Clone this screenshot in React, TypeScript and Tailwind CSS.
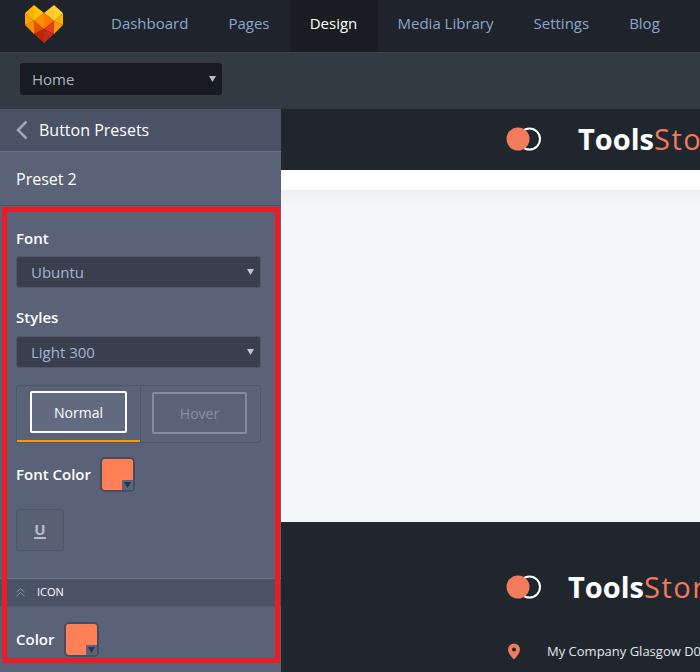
const NAV = ["Dashboard", "Pages", "Design", "Media Library", "Settings", "Blog"];

const Logo = () => (
  <svg width="40" height="40" viewBox="0 0 40 40" className="shrink-0">
    <polygon points="1,9 10,1 10,17" fill="#ffb300" />
    <polygon points="10,1 20,9 10,17" fill="#ffc107" />
    <polygon points="20,9 30,1 30,17" fill="#ffca28" />
    <polygon points="30,1 39,9 30,17" fill="#ffd02e" />
    <polygon points="1,9 10,17 1,21" fill="#ffa000" />
    <polygon points="39,9 30,17 39,21" fill="#ffb300" />
    <polygon points="20,9 10,17 20,25" fill="#ff8f00" />
    <polygon points="20,9 30,17 20,25" fill="#ff7a00" />
    <polygon points="1,21 10,17 10,30" fill="#ff8f00" />
    <polygon points="39,21 30,17 30,30" fill="#ff9800" />
    <polygon points="10,17 20,25 10,30" fill="#e65100" />
    <polygon points="30,17 20,25 30,30" fill="#e53a25" />
    <polygon points="10,30 20,25 20,39" fill="#bf2308" />
    <polygon points="30,30 20,25 20,39" fill="#c62c10" />
  </svg>
);

const BrandMark = () => (
  <svg width="36" height="24" viewBox="0 0 36 24" className="shrink-0">
    <circle cx="23.5" cy="12" r="10.5" fill="none" stroke="#ffffff" strokeWidth="2" />
    <circle cx="12" cy="12" r="11.5" fill="#f07c5b" />
  </svg>
);

const Caret = ({ className }: { className: string }) => (
  <svg width="7" height="6" viewBox="0 0 7 6" className={className}>
    <polygon points="0,0 7,0 3.5,6" fill="currentColor" />
  </svg>
);

const FieldSelect = ({ value }: { value: string }) => (
  <div className="flex h-[32px] items-center justify-between rounded-[3px] border border-[#4e566a] bg-[#3a3f50] pl-[14px] pr-[6px] text-[15px] text-[#a3b4cf]">
    <span className="pt-[1px]">{value}</span>
    <Caret className="text-[#c3c8d2]" />
  </div>
);

const Swatch = () => (
  <div className="relative h-[35px] w-[35px] overflow-hidden rounded-[5px] border-2 border-[#454c5f] bg-[#ff7f57]">
    <div className="absolute bottom-0 right-0 flex h-[10px] w-[11px] items-center justify-center bg-[#5a6277]">
      <Caret className="text-[#2f3443]" />
    </div>
  </div>
);

const Brand = () => (
  <span className="whitespace-nowrap text-[29px] font-bold leading-[24px] text-white">
    Tools<span className="font-normal tracking-[1.5px] text-[#f4795b]">Store</span>
  </span>
);

export default function App() {
  return (
    <div className="flex h-[672px] w-[700px] flex-col overflow-hidden bg-white font-['Open_Sans',sans-serif]">
      {/* top nav */}
      <div className="flex h-[53px] shrink-0 items-stretch border-b border-[#3a434e] bg-[#1f232c]">
        <div className="flex w-[91px] items-center pb-[5px] pl-[24px]">
          <Logo />
        </div>
        {NAV.map((item) => (
          <div
            key={item}
            className={
              item === "Design"
                ? "flex w-[88px] items-center justify-center bg-[#191c21] pb-[5px] text-[15px] font-medium text-white"
                : "flex items-center px-5 pb-[5px] text-[15px] text-[#8ba6cf]"
            }
          >
            {item}
          </div>
        ))}
      </div>

      {/* page select bar */}
      <div className="flex h-[56px] shrink-0 items-center bg-[#323b44] pb-[4px] pl-[20px]">
        <div className="flex h-[32px] w-[202px] items-center justify-between rounded-[3px] bg-[#181b21] pl-[12px] pr-[6px] text-[15px] text-[#a9b5c6]">
          <span>Home</span>
          <Caret className="text-[#b8bcc4]" />
        </div>
      </div>

      <div className="flex min-h-0 flex-1">
        {/* sidebar */}
        <div className="relative flex w-[281px] shrink-0 flex-col bg-[#5a6277]">
          <div className="flex h-[43px] shrink-0 items-center gap-[11px] border-b border-[#697287] bg-[#4a5365] pl-[16px] text-[16px] text-white">
            <svg width="12" height="20" viewBox="0 0 12 20" fill="none" stroke="#a0a7b4" strokeWidth="2.5">
              <polyline points="10.5,1.5 2,10 10.5,18.5" />
            </svg>
            <span>Button Presets</span>
          </div>
          <div className="flex h-[54px] shrink-0 items-center border-b border-[#4a5266] pl-[16px] text-[16px] text-white">
            Preset 2
          </div>

          <div className="flex flex-col pl-[16px] pr-[20px] pt-[22px]">
            <div className="text-[15px] font-semibold leading-[20px] text-white">Font</div>
            <div className="mt-[8px]">
              <FieldSelect value="Ubuntu" />
            </div>
            <div className="mt-[19px] text-[15px] font-semibold leading-[20px] text-white">Styles</div>
            <div className="mt-[9px]">
              <FieldSelect value="Light 300" />
            </div>

            {/* normal / hover tabs */}
            <div className="mt-[17px] flex h-[58px] rounded-[3px] border border-[#4e566a]">
              <div className="flex w-[123px] items-center justify-center border-b-2 border-[#f59e0b] pb-[2px]">
                <div className="flex h-[42px] w-[97px] items-center justify-center rounded-[2px] border-2 border-white bg-[#626a7f] text-[14px] text-white">
                  Normal
                </div>
              </div>
              <div className="flex flex-1 items-center justify-center border-l border-[#4e566a] pb-[2px] pr-[2px]">
                <div className="flex h-[42px] w-[95px] items-center justify-center rounded-[2px] border-2 border-[#858c9c] text-[14px] text-[#8b92a2]">
                  Hover
                </div>
              </div>
            </div>

            <div className="mt-[14px] flex items-center gap-[9px]">
              <span className="text-[15px] font-semibold text-white">Font Color</span>
              <Swatch />
            </div>

            <div className="mt-[17px] flex h-[42px] w-[48px] items-center justify-center rounded-[3px] border border-[#4e566a] bg-[#586074]">
              <span className="border-b-2 border-[#b6bbc6] text-[15px] font-bold leading-[15px] text-[#b6bbc6]">U</span>
            </div>
          </div>

          <div className="mt-[27px] flex h-[29px] shrink-0 items-center gap-[12px] border-y border-[#69728a] border-b-[#535b6e] bg-[#4a5365] pl-[16px] text-[11px] text-white">
            <svg width="9" height="9" viewBox="0 0 9 9" fill="none" stroke="#8e95a5" strokeWidth="1">
              <polyline points="0.5,4 4.5,0.7 8.5,4" />
              <polyline points="0.5,8 4.5,4.7 8.5,8" />
            </svg>
            <span>ICON</span>
          </div>

          <div className="flex items-center gap-[10px] px-[16px] pt-[15px]">
            <span className="text-[15px] font-semibold text-white">Color</span>
            <Swatch />
          </div>

          {/* red annotation box */}
          <div className="absolute left-[2px] top-[98px] h-[456px] w-[278px] border-[5px] border-[#ed1c24]" />
        </div>

        {/* page preview */}
        <div className="flex min-w-0 flex-1 flex-col">
          <div className="flex h-[61px] shrink-0 items-center gap-[36px] overflow-hidden bg-[#20262d] pb-[1px] pl-[225px]">
            <BrandMark />
            <Brand />
          </div>
          <div className="h-[20px] shrink-0 bg-white" />
          <div className="h-[332px] shrink-0 bg-gradient-to-b from-[#eeeff1] to-[#f5f6f8] to-[5%]" />
          <div className="flex flex-1 flex-col overflow-hidden bg-[#20262d] pl-[225px] pt-[53px]">
            <div className="flex items-center gap-[26px]">
              <BrandMark />
              <Brand />
            </div>
            <div className="mt-[43px] flex items-center">
              <svg width="14" height="17" viewBox="0 0 14 17" className="ml-[1px] shrink-0">
                <path
                  fillRule="evenodd"
                  d="M7 0.5a6 6 0 0 1 6 6c0 3.6-4 8-6 10c-2-2-6-6.4-6-10a6 6 0 0 1 6-6zM7 4.5a2 2 0 1 0 0 4a2 2 0 0 0 0-4z"
                  fill="#f07c5b"
                />
              </svg>
              <span className="ml-[26px] whitespace-nowrap text-[13px] text-[#e4e6e9]">My Company Glasgow D04 89GR</span>
            </div>
          </div>
        </div>
      </div>
    </div>
  );
}
